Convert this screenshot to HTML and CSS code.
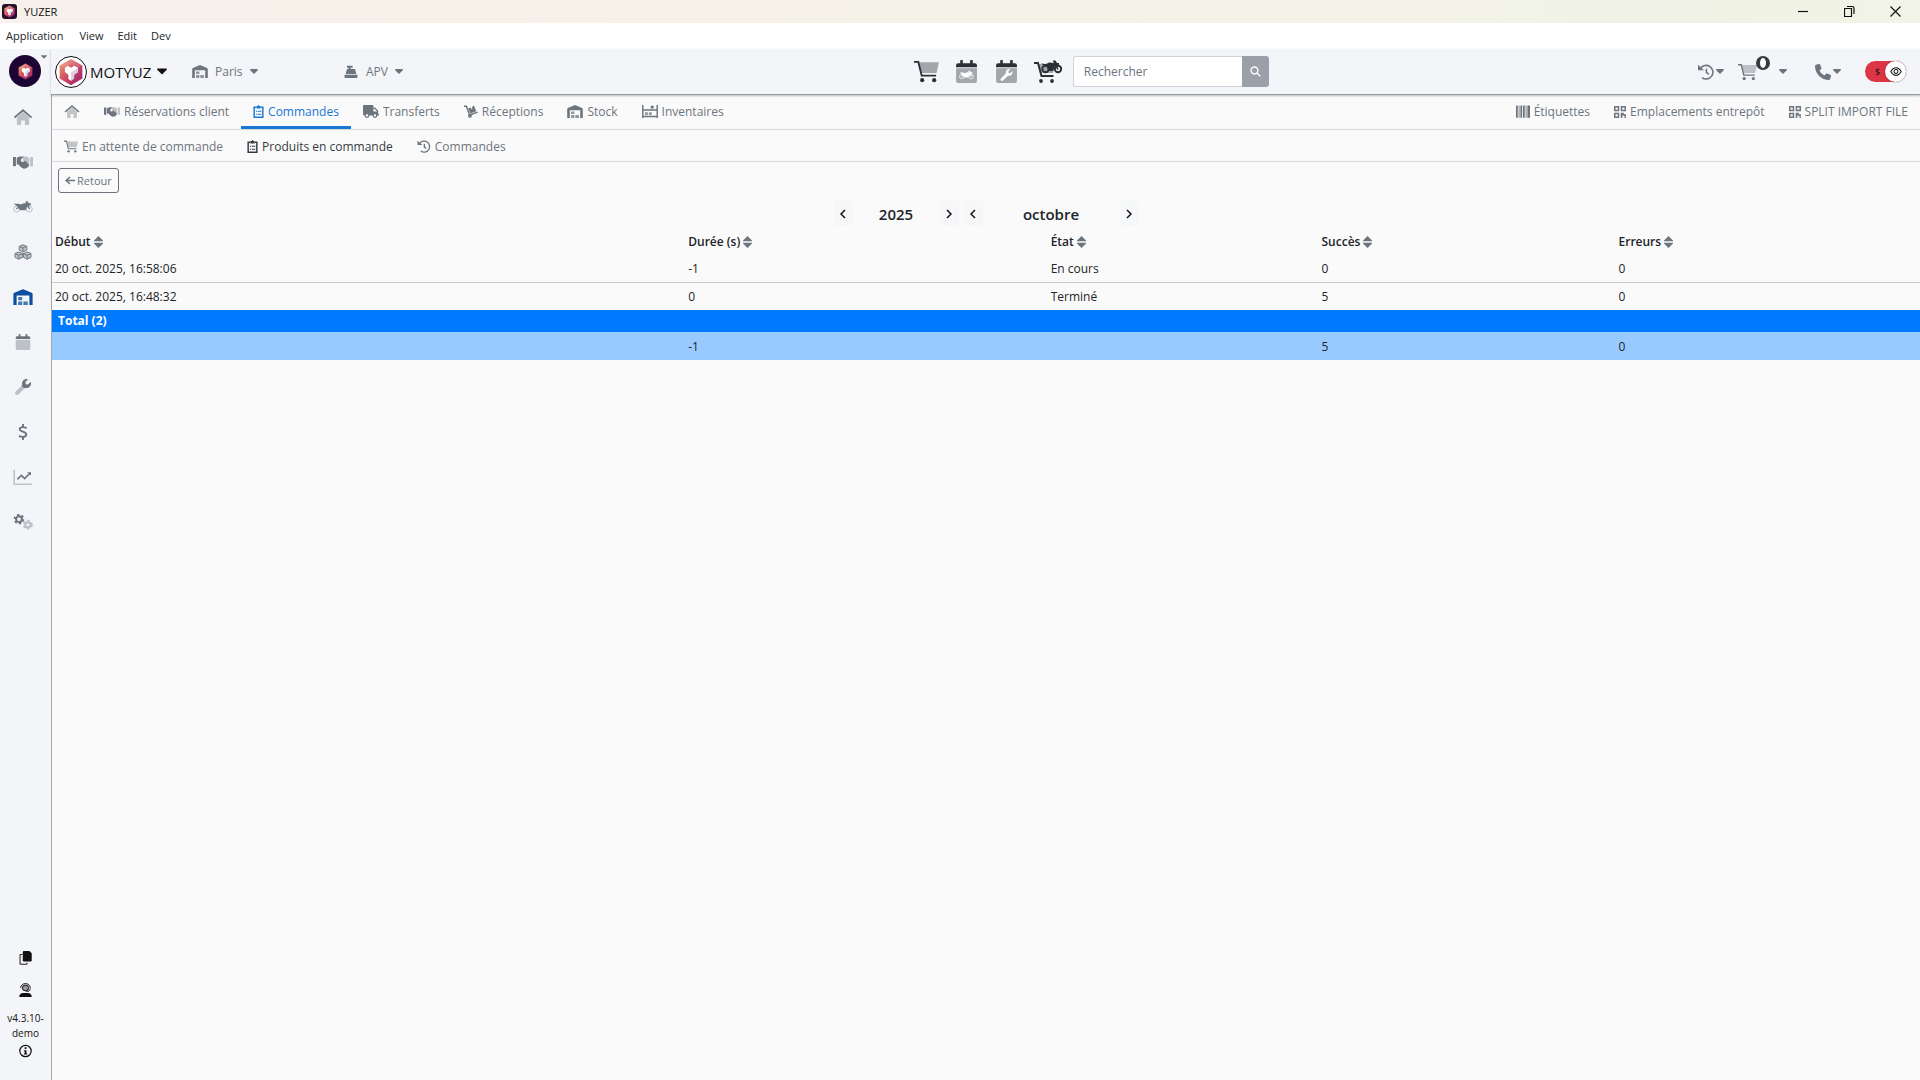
FILE: index.html
```
<!DOCTYPE html>
<html lang="fr">

<head>
  <meta charset="UTF-8">
  <meta name="viewport" content="width=device-width, initial-scale=1.0">
  <title>YUZER</title>
  <link rel="stylesheet" href="styles.css">
</head>

<body>
  <svg class="sprite" aria-hidden="true">
    <defs>
      <linearGradient id="brand-fill" x1="0" y1="0" x2="1" y2="1">
        <stop offset="0" stop-color="#f2a26e" />
        <stop offset=".5" stop-color="#cf4a60" />
        <stop offset="1" stop-color="#8f1f78" />
      </linearGradient>
    </defs>
    <symbol id="cube" viewBox="0 0 32 32">
      <path fill="url(#brand-fill)" d="M16 1l13 7.500v15L16 31 3 23.500v-15z" />
      <path fill="#fff" fill-opacity=".15" d="M16 1L3 8.500 8 11l8-4 8 4 5-2.500z" />
      <path fill="#fff" d="M9 11l3.500-2.200L16 11l3.500-2.200L24 11v5l-4.500 3v4.500L16 26l-3-2v-5l-4-3z" />
      <path fill="#dccfda" d="M16 16.500l8-5V16l-4.500 3v4.500L16 26z" />
    </symbol>
    <symbol id="home" viewBox="0 0 24 21">
      <path class="fade" d="M4 11l8-7 8 7v9a1 1 0 0 1-1 1h-4.500v-6h-5v6H5a1 1 0 0 1-1-1z" />
      <path d="M12 0l12 10.500-1.500 1.800L12 3.200 1.500 12.300 0 10.500z" />
    </symbol>
    <symbol id="handshake" viewBox="0 0 24 16">
      <path d="M0 2h3.500v11H0z" />
      <path class="fade" d="M20.500 2H24v11h-3.500zM12 1.500h4.500l3 2v8.500l-2 .5-5.500-6z" />
      <path d="M4.500 3L8 1.500h5L9.500 5v2.500l3 .5 2-1.500 5 5-1.500 2.500-2 1.500-3 .5-3-1.500-3.500-3.500h-2z" />
    </symbol>
    <symbol id="moto" viewBox="0 0 24 14">
      <circle class="line fade" cx="4.500" cy="9.500" r="3.600" />
      <circle class="line fade" cx="19.500" cy="9.500" r="3.600" />
      <path d="M1 3h6l2 1 4-1.500h3L15 1V0h2.500l1.500 2.500h2.500V5H19l1.500 4.500-1 .5-2.500-4-2 5H8.500L7 8.500 4.500 10l-.8-1L6 6.500l-2-1z" />
    </symbol>
    <symbol id="boxes" viewBox="0 0 24 21">
      <g class="line">
        <path class="shade" d="M12 1l5 2v5l-5 2.500L7 8V3zM6.500 10.500l5 2v5l-5 2.500-5-2.500v-5zM17.500 10.500l5 2v5l-5 2.500-5-2.500v-5z" />
        <path d="M7 3.200l5 2 5-2M12 5.200v5M1.500 12.700l5 2 5-2 1 0 5 2 5-2M6.500 14.700v5M17.500 14.700v5" />
      </g>
    </symbol>
    <symbol id="warehouse" viewBox="0 0 24 20">
      <path d="M0 6.500a2 2 0 0 1 1.200-1.800L11 .5a3 3 0 0 1 2 0l9.800 4.200A2 2 0 0 1 24 6.500V20h-4V8H4v12H0z" />
      <path class="soft" d="M6 10h5v4H6zM6 15.500h5V20H6zM12.500 15.500H18V20h-5.500z" />
    </symbol>
    <symbol id="calendar" viewBox="0 0 20 22">
      <path class="fade" d="M0 8h20v12a2 2 0 0 1-2 2H2a2 2 0 0 1-2-2z" />
      <path d="M0 7V5a2 2 0 0 1 2-2h2V1a1 1 0 0 1 2.500 0v2h7V1A1 1 0 0 1 16 1v2h2a2 2 0 0 1 2 2v2z" />
    </symbol>
    <symbol id="wrench" viewBox="0 0 512 512">
      <path class="fade" d="M225 196L19 403c-25 25-25 65 0 90s65 25 90 0l207-207z" />
      <path d="M507.730 109.100c-2.240-9-13.500-12-20-5.500l-74.400 74.400-68-11.300-11.300-68 74.400-74.400c6.600-6.600 3.400-17.900-5.700-20.100-47.400-11.700-99.500.9-136.600 37.900-39.600 39.600-50.500 97.100-34 147.200L210 212l92 92 20-24c50 16.700 107.500 5.700 147.400-34.200 37-37 49.700-89.300 38.300-136.700z" />
    </symbol>
    <symbol id="dollar" viewBox="0 0 14 22">
      <path class="stroke3" d="M12 6C10.500 4 3 3 2.500 7S12 10 11.500 14.500 3 18 1.500 16M7 0v4M7 18v4" />
    </symbol>
    <symbol id="chart" viewBox="0 0 24 20">
      <path class="stroke2 fade" d="M1 1v18h22" />
      <path class="stroke2" d="M5 13l5-5 4 4 7-7" />
      <path d="M17 4h5v4z" />
    </symbol>
    <symbol id="cogs" viewBox="0 0 24 20">
      <circle class="stroke3" cx="7" cy="6.500" r="3.600" />
      <circle class="teeth" cx="7" cy="6.500" r="5.600" />
      <g class="fade">
        <circle class="stroke3" cx="18" cy="13.500" r="3.200" />
        <circle class="teeth" cx="18" cy="13.500" r="5.200" />
      </g>
    </symbol>
    <symbol id="copy" viewBox="0 0 16 18">
      <path class="line" d="M4 4.500H1v12.500h9V15" />
      <path d="M6 0h7l3 3v9a1.500 1.500 0 0 1-1.500 1.500H6A1.500 1.500 0 0 1 4.500 12V1.500A1.500 1.500 0 0 1 6 0z" />
    </symbol>
    <symbol id="support" viewBox="0 0 16 18">
      <circle class="shade" cx="8" cy="6" r="4.500" />
      <path class="line" d="M1.800 6.500a6.200 5.800 0 0 1 12.400 0M4 6a4 4 0 0 0 8 0 4 3 0 0 0-8 0M14 7c0 3-2 4-5 4" />
      <path d="M0 18c0-3.500 2-5 5-5h6c3 0 5 1.500 5 5z" />
    </symbol>
    <symbol id="info" viewBox="0 0 16 16">
      <circle class="info-ring" cx="8" cy="8" r="7" />
      <path d="M7 3.500h2.200v2H7zM6 7h3.200v4H10v1.300H6V11h1V8.300H6z" />
    </symbol>
    <symbol id="cart" viewBox="0 0 26 23">
      <path class="fade" d="M5.500 2H26l-2.500 11H8z" />
      <path class="stroke2" d="M0 1.500h4.500L8 15.800h15" />
      <circle cx="8.500" cy="20.500" r="2.200" />
      <circle cx="21" cy="20.500" r="2.200" />
    </symbol>
    <symbol id="cart-moto" viewBox="0 0 28 23">
      <path class="fade" d="M5 4h16l-2 9H7z" />
      <path class="stroke2" d="M0 3h4l3.500 13h12" />
      <circle cx="7" cy="21" r="1.900" />
      <circle cx="18" cy="21" r="1.900" />
      <circle class="stroke2" cx="11.500" cy="9" r="3.200" />
      <circle class="stroke2" cx="24" cy="9" r="3.200" />
      <path d="M7 3.500l5 .5 3-1.500 5 .5-1-1.500V.5h2.500l1.500 2.500H25v2.500h-2l1.500 3.500-1 1-2.500-4-2 5h-4.500l-1.500-4-4-2z" />
    </symbol>
    <symbol id="clipboard" viewBox="0 0 14 18">
      <path class="stroke2" d="M3.500 3H1v14h12V3h-2.500" />
      <path d="M4 1.500h1.500a1.600 1.600 0 0 1 3 0H10V5H4zM3.500 8h1.500v1.500H3.500zM6 8h5v1.500H6zM3.500 12h1.500v1.500H3.500zM6 12h5v1.500H6z" />
    </symbol>
    <symbol id="truck" viewBox="0 0 640 512">
      <path d="M624 352h-16V243.900c0-12.700-5.100-24.900-14.100-33.900L494 110.100c-9-9-21.200-14.100-33.900-14.100H416V48c0-26.500-21.500-48-48-48H48C21.500 0 0 21.500 0 48v320c0 26.500 21.500 48 48 48h16c0 53 43 96 96 96s96-43 96-96h128c0 53 43 96 96 96s96-43 96-96h48c8.800 0 16-7.200 16-16v-32c0-8.800-7.200-16-16-16zM160 464c-26.500 0-48-21.500-48-48s21.500-48 48-48 48 21.500 48 48-21.500 48-48 48zm320 0c-26.500 0-48-21.500-48-48s21.500-48 48-48 48 21.500 48 48-21.500 48-48 48zm80-208H416V144h44.100l99.900 99.900V256z" />
    </symbol>
    <symbol id="dolly" viewBox="0 0 20 18">
      <path class="stroke2" d="M0 1.500h3.500L8 14l11.500-4" />
      <circle cx="8.500" cy="15.200" r="2.700" />
      <path d="M6 4.500l3.500-1.200 1 2.500 1.500-.5-.8-2.500 3-2.300 3.300 8.200-8.500 3z" />
    </symbol>
    <symbol id="shelves" viewBox="0 0 22 18">
      <path d="M0 0h2v18H0zM20 0h2v18h-2zM2 6h18v2H2zM2 15h18v2H2zM12 1h4v4h-4z" />
      <path class="soft" d="M4 10h4v4H4zM9.500 10h4v4h-4z" />
    </symbol>
    <symbol id="history" viewBox="0 0 20 20">
      <path class="stroke2" d="M3 5.500A8.500 8.500 0 1 1 5 17M10.500 6v4.500l3 2.500" />
      <path d="M0 1l7.500 6.800H0z" />
    </symbol>
    <symbol id="barcode" viewBox="0 0 16 14">
      <path d="M0 0h2v14H0zM3 0h1v14H3zM5 0h2v14H5zM8 0h2v14H8zM11 0h1v14h-1zM13 0h3v14h-3z" />
    </symbol>
    <symbol id="qrcode" viewBox="0 0 16 16">
      <path class="stroke2" d="M1 1h5v5H1zM10 1h5v5h-5zM1 10h5v5H1z" />
      <path d="M9 9h4v2h3v3h-3v-1.500h-2V16H9zM14 14.500h2V16h-2z" />
    </symbol>
    <symbol id="register" viewBox="0 0 16 16">
      <path d="M3 1h7v2.500H7.500V5h5.500l1.500 6h-13L3 5h2V3.500H3zM0 12h16v3a1 1 0 0 1-1 1H1a1 1 0 0 1-1-1z" />
    </symbol>
    <symbol id="search" viewBox="0 0 16 16">
      <path class="stroke2" d="M10.500 10.500L15 15" />
      <circle class="stroke2" cx="6.500" cy="6.500" r="5" />
    </symbol>
    <symbol id="phone" viewBox="0 0 512 512">
      <path d="M164.900 24.600c-7.700-18.600-28-28.500-47.400-23.200l-88 24C12.100 30.200 0 46 0 64c0 247.400 200.600 448 448 448 18 0 33.800-12.100 38.600-29.500l24-88c5.300-19.400-4.600-39.700-23.200-47.400l-96-40c-16.300-6.800-35.200-2.100-46.300 11.600L304.700 368C234.300 334.700 177.300 277.700 144 207.300L193.300 167c13.700-11.200 18.400-30 11.600-46.300z" />
    </symbol>
    <symbol id="eye" viewBox="0 0 14 12">
      <path class="line" d="M1 6c3-6 9-6 12 0-3 6-9 6-12 0z" />
      <circle class="line" cx="7" cy="6" r="2.300" />
    </symbol>
    <symbol id="caret" viewBox="0 0 10 6">
      <path d="M.5 0h9L10 1 5 6 0 1z" />
    </symbol>
    <symbol id="sort" viewBox="0 0 9 12">
      <path d="M4.500 0L9 4.500v.8H0v-.8zM4.500 12L9 7.500v-.8H0v.8z" />
    </symbol>
    <symbol id="prev" viewBox="0 0 6 10">
      <path class="chevron" d="M5 1L1 5l4 4" />
    </symbol>
    <symbol id="next" viewBox="0 0 6 10">
      <path class="chevron" d="M1 1l4 4-4 4" />
    </symbol>
    <symbol id="back" viewBox="0 0 10 9">
      <path class="chevron" d="M5 1L1 4.500 5 8M1 4.500h9" />
    </symbol>
  </svg>

  <div class="titlebar">
    <svg class="titlebar-logo"><use href="#cube" /></svg>
    <span class="titlebar-name">YUZER</span>
    <div class="window-controls">
      <button aria-label="Réduire"><svg viewBox="0 0 11 11"><path class="line" d="M0 5.500h10" /></svg></button>
      <button aria-label="Restaurer"><svg viewBox="0 0 11 11"><path class="line" d="M3 .5h5a2 2 0 0 1 2 2V8M.5 2.500h7v8h-7z" /></svg></button>
      <button aria-label="Fermer"><svg viewBox="0 0 11 11"><path class="line" d="M.5.5l10 10M10.500.5l-10 10" /></svg></button>
    </div>
  </div>

  <div class="menubar">
    <button>Application</button>
    <button>View</button>
    <button>Edit</button>
    <button>Dev</button>
  </div>

  <div class="app">
    <aside class="sidebar">
      <button class="account" aria-label="Compte">
        <span class="account-logo"><svg><use href="#cube" /></svg></span>
        <svg class="account-caret"><use href="#caret" /></svg>
      </button>
      <nav class="sidebar-nav">
        <a href="#" aria-label="Accueil"><svg><use href="#home" /></svg></a>
        <a href="#" aria-label="Clients"><svg><use href="#handshake" /></svg></a>
        <a href="#" aria-label="Motos"><svg><use href="#moto" /></svg></a>
        <a href="#" aria-label="Produits"><svg><use href="#boxes" /></svg></a>
        <a href="#" aria-label="Entrepôt" class="active"><svg><use href="#warehouse" /></svg></a>
        <a href="#" aria-label="Agenda"><svg><use href="#calendar" /></svg></a>
        <a href="#" aria-label="Atelier"><svg><use href="#wrench" /></svg></a>
        <a href="#" aria-label="Caisse"><svg><use href="#dollar" /></svg></a>
        <a href="#" aria-label="Statistiques"><svg><use href="#chart" /></svg></a>
        <a href="#" aria-label="Paramètres"><svg><use href="#cogs" /></svg></a>
      </nav>
      <div class="sidebar-footer">
        <button aria-label="Copier"><svg><use href="#copy" /></svg></button>
        <button aria-label="Support"><svg><use href="#support" /></svg></button>
        <span class="version">v4.3.10-<br>demo</span>
        <button aria-label="Informations"><svg><use href="#info" /></svg></button>
      </div>
    </aside>

    <div class="main">
      <header class="header">
        <div class="header-left">
          <button class="brand">
            <span class="brand-logo"><svg><use href="#cube" /></svg></span>
            MOTYUZ
            <svg class="caret-large"><use href="#caret" /></svg>
          </button>
          <button class="picker">
            <svg class="icon"><use href="#warehouse" /></svg>
            Paris
            <svg class="caret"><use href="#caret" /></svg>
          </button>
          <button class="picker">
            <svg class="icon"><use href="#register" /></svg>
            APV
            <svg class="caret"><use href="#caret" /></svg>
          </button>
        </div>
        <div class="header-right">
          <div class="shortcuts">
            <button aria-label="Vente"><svg><use href="#cart" /></svg></button>
            <button aria-label="Agenda motos"><svg><use href="#calendar" /></svg><svg class="overlay"><use href="#moto" /></svg></button>
            <button aria-label="Agenda atelier"><svg><use href="#calendar" /></svg><svg class="overlay"><use href="#wrench" /></svg></button>
            <button aria-label="Vente moto"><svg class="wide"><use href="#cart-moto" /></svg></button>
          </div>
          <form class="search">
            <input type="text" placeholder="Rechercher" aria-label="Rechercher">
            <button type="button" aria-label="Lancer la recherche"><svg><use href="#search" /></svg></button>
          </form>
          <div class="tools">
            <button aria-label="Historique"><svg><use href="#history" /></svg><svg class="caret"><use href="#caret" /></svg></button>
            <button class="basket" aria-label="Panier"><svg><use href="#cart" /></svg><span class="badge"></span><svg class="caret"><use href="#caret" /></svg></button>
            <button aria-label="Appels"><svg><use href="#phone" /></svg><svg class="caret"><use href="#caret" /></svg></button>
            <label class="switch">
              <input type="checkbox" checked aria-label="Afficher les prix">
              <span class="switch-text">$</span>
              <span class="switch-knob"><svg><use href="#eye" /></svg></span>
            </label>
          </div>
        </div>
      </header>

      <nav class="tabs">
        <a href="#" aria-label="Accueil"><svg><use href="#home" /></svg></a>
        <a href="#"><svg><use href="#handshake" /></svg>Réservations client</a>
        <a href="#" class="active"><svg class="narrow"><use href="#clipboard" /></svg>Commandes</a>
        <a href="#"><svg><use href="#truck" /></svg>Transferts</a>
        <a href="#"><svg class="medium"><use href="#dolly" /></svg>Réceptions</a>
        <a href="#"><svg><use href="#warehouse" /></svg>Stock</a>
        <a href="#"><svg><use href="#shelves" /></svg>Inventaires</a>
        <a href="#" class="push"><svg class="medium"><use href="#barcode" /></svg>Étiquettes</a>
        <a href="#"><svg class="small"><use href="#qrcode" /></svg>Emplacements entrepôt</a>
        <a href="#"><svg class="small"><use href="#qrcode" /></svg>SPLIT IMPORT FILE</a>
      </nav>

      <nav class="tabs subtabs">
        <a href="#"><svg class="medium"><use href="#cart" /></svg>En attente de commande</a>
        <a href="#" class="current"><svg class="narrow"><use href="#clipboard" /></svg>Produits en commande</a>
        <a href="#"><svg class="medium"><use href="#history" /></svg>Commandes</a>
      </nav>

      <main class="content">
        <button class="back"><svg><use href="#back" /></svg>Retour</button>

        <div class="period">
          <button aria-label="Année précédente"><svg><use href="#prev" /></svg></button>
          <span class="year">2025</span>
          <button aria-label="Année suivante"><svg><use href="#next" /></svg></button>
          <button class="month-prev" aria-label="Mois précédent"><svg><use href="#prev" /></svg></button>
          <span class="month">octobre</span>
          <button aria-label="Mois suivant"><svg><use href="#next" /></svg></button>
        </div>

        <table class="orders">
          <colgroup>
            <col class="col-start">
            <col class="col-duration">
            <col class="col-state">
            <col class="col-success">
            <col>
          </colgroup>
          <thead>
            <tr>
              <th><button>Début<svg><use href="#sort" /></svg></button></th>
              <th><button>Durée (s)<svg><use href="#sort" /></svg></button></th>
              <th><button>État<svg><use href="#sort" /></svg></button></th>
              <th><button>Succès<svg><use href="#sort" /></svg></button></th>
              <th><button>Erreurs<svg><use href="#sort" /></svg></button></th>
            </tr>
          </thead>
          <tbody>
            <tr>
              <td>20 oct. 2025, 16:58:06</td>
              <td>-1</td>
              <td>En cours</td>
              <td>0</td>
              <td>0</td>
            </tr>
            <tr>
              <td>20 oct. 2025, 16:48:32</td>
              <td>0</td>
              <td>Terminé</td>
              <td>5</td>
              <td>0</td>
            </tr>
          </tbody>
          <tfoot>
            <tr class="total-title">
              <th colspan="5">Total (2)</th>
            </tr>
            <tr class="total">
              <td></td>
              <td>-1</td>
              <td></td>
              <td>5</td>
              <td>0</td>
            </tr>
          </tfoot>
        </table>
      </main>
    </div>
  </div>
</body>

</html>
```
FILE: styles.css
```
* {
  box-sizing: border-box;
}

body {
  margin: 0;
  min-height: 100vh;
  display: flex;
  flex-direction: column;
  background: #fafafa;
  color: #212529;
  font-family: "Open Sans", "Noto Sans", sans-serif;
  font-size: 12px;
  line-height: 18px;
}

button {
  margin: 0;
  padding: 0;
  border: 0;
  background: none;
  color: inherit;
  font: inherit;
}

a {
  color: inherit;
  text-decoration: none;
}

svg {
  fill: currentColor;
  flex: none;
}

/* shared icon parts */
.sprite {
  position: absolute;
  width: 0;
  height: 0;
}

.fade {
  opacity: var(--fade, .4);
}

.soft {
  opacity: .75;
}

.line,
.stroke2,
.stroke3,
.teeth,
.info-ring,
.chevron {
  fill: none;
  stroke: currentColor;
  stroke-width: 1.2;
}

.shade {
  fill: currentColor;
  fill-opacity: .4;
}

.stroke2 {
  stroke-width: 2;
}

.stroke3 {
  stroke-width: 2.6;
}

.teeth {
  stroke-width: 2;
  stroke-dasharray: 3 2.8;
}

.info-ring,
.chevron {
  stroke-width: 1.5;
}

/* window */
.titlebar {
  height: 23px;
  padding-left: 2px;
  display: flex;
  align-items: center;
  background: linear-gradient(90deg, #f8f0eb, #f5f2e8 50%, #f0f3e5);
  color: #111;
}

.titlebar-logo {
  width: 15px;
  height: 15px;
  padding: 1px;
  border-radius: 3px;
  background: #24102e;
}

.titlebar-name {
  margin-left: 7px;
  font-size: 11px;
}

.window-controls {
  margin-left: auto;
  padding-right: 2px;
  display: flex;
}

.window-controls button {
  width: 46px;
  height: 21px;
  display: flex;
  align-items: center;
  justify-content: center;
}

.window-controls svg {
  width: 11px;
  height: 11px;
}

.menubar {
  height: 26px;
  padding-left: 6px;
  display: flex;
  align-items: center;
  gap: 14px;
  background: #fff;
}

.menubar button {
  font-size: 11px;
}

.menubar button:first-child {
  margin-right: 2px;
}

.app {
  flex: 1;
  display: flex;
  background: #f4f5f8;
}

/* sidebar */
.sidebar {
  width: 51px;
  display: flex;
  flex-direction: column;
  color: #6c757d;
}

.account {
  height: 45px;
  padding: 6px 0 0 9px;
  display: flex;
  align-items: flex-start;
}

.account-logo {
  width: 32px;
  height: 32px;
  display: flex;
  align-items: center;
  justify-content: center;
  border-radius: 50%;
  background: #1c0535;
}

.account-logo svg {
  width: 17px;
  height: 17px;
}

.account-caret {
  width: 6px;
  height: 4px;
}

.sidebar-nav {
  display: flex;
  flex-direction: column;
}

.sidebar-nav a {
  height: 45px;
  padding-right: 5px;
  display: flex;
  align-items: center;
  justify-content: center;
}

.sidebar-nav svg {
  width: 20px;
  height: 16px;
}

.sidebar-nav .active {
  color: #0b4f9e;
}

.sidebar-footer {
  margin-top: auto;
  padding-bottom: 20px;
  display: flex;
  flex-direction: column;
  align-items: center;
  color: #111;
}

.sidebar-footer button {
  height: 16px;
  display: flex;
}

.sidebar-footer button + button {
  margin-top: 16px;
}

.sidebar-footer svg {
  width: 13px;
  height: 14px;
}

.version {
  margin: 12px 0 3px;
  font-size: 10px;
  line-height: 15px;
  text-align: center;
}

/* header */
.main {
  flex: 1;
  min-width: 0;
  display: flex;
  flex-direction: column;
}

.header {
  height: 46px;
  padding: 0 14px 0 4px;
  display: flex;
  position: relative;
  border-bottom: 1px solid #989ba0;
  box-shadow: 0 1px 2px rgba(0, 0, 0, .25);
  color: #6c757d;
}

.header button {
  display: flex;
  align-items: center;
}

.header-left {
  width: 46.4%;
  display: flex;
  align-items: center;
}

.header-left .brand {
  width: 137px;
  gap: 3px;
  color: #111;
  font-size: 15px;
}

.brand-logo {
  width: 32px;
  height: 32px;
  display: flex;
  align-items: center;
  justify-content: center;
  border: 1px solid #111;
  border-radius: 50%;
  background: #fff;
}

.brand-logo svg {
  width: 28px;
  height: 28px;
}

.caret-large {
  width: 10px;
  height: 7px;
  margin-left: 3px;
}

.caret {
  width: 8px;
  height: 5px;
}

.picker {
  width: 151px;
  gap: 7px;
}

.picker .icon {
  width: 16px;
  height: 13px;
}

.header-right {
  flex: 1;
  display: flex;
  align-items: center;
}

.shortcuts {
  display: flex;
  align-items: center;
  gap: 15px;
  color: #2b3035;
}

.shortcuts button {
  position: relative;
}

.shortcuts svg {
  width: 25px;
  height: 23px;
}

.shortcuts .wide {
  width: 28px;
}

.shortcuts .overlay {
  --fade: 1;
  position: absolute;
  left: 5px;
  bottom: 2px;
  width: 15px;
  height: 12px;
  color: #fff;
}

.search {
  margin-left: 11px;
  display: flex;
}

.search input {
  width: 169px;
  height: 31px;
  padding: 0 10px;
  border: 1px solid #ced4da;
  border-right: 0;
  border-radius: 3px 0 0 3px;
  background: #fff;
  font: inherit;
}

.search input::placeholder {
  color: #6c757d;
}

.search button {
  width: 27px;
  justify-content: center;
  border-radius: 0 3px 3px 0;
  background: #9a9fa8;
  color: #fff;
}

.search svg {
  width: 11px;
  height: 11px;
}

.tools {
  margin-left: auto;
  display: flex;
  align-items: center;
}

.tools button {
  gap: 2px;
  margin-right: 14px;
}

.tools svg {
  width: 16px;
  height: 16px;
}

.tools .caret {
  width: 8px;
  height: 5px;
}

.tools .basket {
  gap: 22px;
  margin-right: 28px;
  position: relative;
}

.tools .basket > svg:first-child {
  width: 19px;
  height: 18px;
}

.badge {
  position: absolute;
  left: 18px;
  top: -7px;
  width: 14px;
  height: 14px;
  border: 2px solid #343a40;
  border-left-width: 4px;
  border-right-width: 4px;
  border-radius: 50%;
  background: #fff;
}

.switch {
  width: 41px;
  height: 21px;
  margin-left: 10px;
  padding-left: 10px;
  display: flex;
  align-items: center;
  justify-content: space-between;
  border-radius: 11px;
  background: #dc3545;
  color: #111;
  font-size: 9px;
}

.switch input {
  position: absolute;
  opacity: 0;
}

.switch-knob {
  width: 21px;
  height: 21px;
  display: flex;
  align-items: center;
  justify-content: center;
  border-radius: 50%;
  background: #fff;
  box-shadow: 0 0 2px rgba(0, 0, 0, .4);
}

.switch-knob svg {
  width: 12px;
  height: 11px;
}

/* tabs */
.tabs {
  height: 35px;
  display: flex;
  border-left: 1px solid #a5a8ac;
  border-bottom: 1px solid #d5d8dc;
  background: #fafafa;
  color: #6c757d;
}

.tabs a {
  padding: 2px 12px 0;
  display: flex;
  align-items: center;
  gap: 4px;
  border-bottom: 3px solid transparent;
  white-space: nowrap;
}

.tabs svg {
  width: 16px;
  height: 13px;
}

.tabs .medium {
  width: 14px;
}

.tabs .small {
  width: 12px;
  height: 12px;
}

.tabs .narrow {
  width: 11px;
}

.tabs .active {
  border-bottom-color: #1976d2;
  color: #1976d2;
}

.tabs .current {
  color: #343a40;
}

.tabs .push {
  margin-left: auto;
}

.subtabs {
  height: 32px;
}

.subtabs a {
  border-bottom: 0;
}

/* content */
.content {
  flex: 1;
  border-left: 1px solid #a5a8ac;
  background: #fafafa;
}

.back {
  height: 25px;
  margin: 6px 0 0 6px;
  padding: 0 6px;
  display: flex;
  align-items: center;
  gap: 2px;
  border: 1px solid #6c757d;
  border-radius: 3px;
  color: #6c757d;
  font-size: 11px;
}

.back svg {
  width: 10px;
  height: 9px;
}

.period {
  margin-top: 8px;
  display: flex;
  align-items: center;
  justify-content: center;
  font-size: 15px;
  font-weight: 600;
  text-align: center;
}

.period button {
  width: 19px;
  height: 25px;
  display: flex;
  align-items: center;
  justify-content: center;
  border-radius: 3px;
  background: #f6f7f8;
  color: #111;
}

.period svg {
  width: 6px;
  height: 10px;
}

.period .month-prev {
  margin-left: 5px;
}

.year {
  width: 87px;
}

.month {
  width: 137px;
}

.orders {
  width: 100%;
  border-collapse: collapse;
  table-layout: fixed;
}

.col-start {
  width: 33.9%;
}

.col-duration {
  width: 19.4%;
}

.col-state {
  width: 14.5%;
}

.col-success {
  width: 15.9%;
}

.orders th,
.orders td {
  height: 28px;
  padding: 2px 3px 0;
  text-align: left;
}

.orders thead th {
  padding-top: 4px;
  font-weight: 600;
}

.orders th button {
  display: flex;
  align-items: center;
  gap: 3px;
}

.orders th svg {
  width: 9px;
  height: 12px;
  color: #6c757d;
}

.orders tbody tr + tr {
  border-top: 1px solid #c9cccf;
}

.orders .total-title th {
  height: 22px;
  padding: 0 6px;
  background: #007bff;
  color: #fff;
  font-weight: 700;
}

.orders .total td {
  background: #99caff;
}
```
